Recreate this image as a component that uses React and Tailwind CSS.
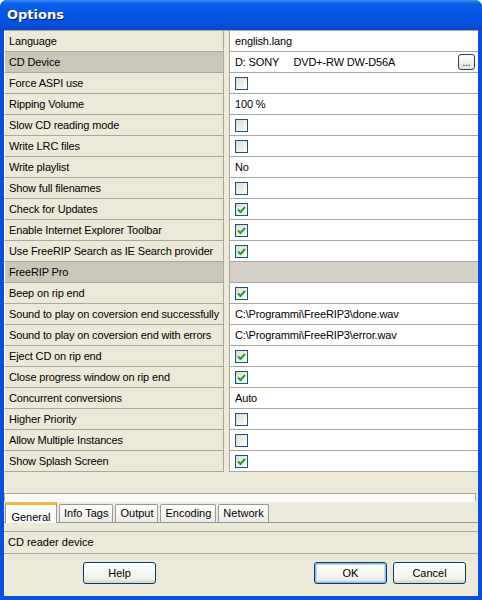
import React from "react";

const rows = [
  { label: "Language", value: "english.lang" },
  { label: "CD Device", value: "D: SONY     DVD+-RW DW-D56A", selected: true, browse: true },
  { label: "Force ASPI use", check: false },
  { label: "Ripping Volume", value: "100 %" },
  { label: "Slow CD reading mode", check: false },
  { label: "Write LRC files", check: false },
  { label: "Write playlist", value: "No" },
  { label: "Show full filenames", check: false },
  { label: "Check for Updates", check: true },
  { label: "Enable Internet Explorer Toolbar", check: true },
  { label: "Use FreeRIP Search as IE Search provider", check: true },
  { label: "FreeRIP Pro", category: true },
  { label: "Beep on rip end", check: true },
  { label: "Sound to play on coversion end successfully", value: "C:\\Programmi\\FreeRIP3\\done.wav" },
  { label: "Sound to play on coversion end with errors", value: "C:\\Programmi\\FreeRIP3\\error.wav" },
  { label: "Eject CD on rip end", check: true },
  { label: "Close progress window on rip end", check: true },
  { label: "Concurrent conversions", value: "Auto" },
  { label: "Higher Priority", check: false },
  { label: "Allow Multiple Instances", check: false },
  { label: "Show Splash Screen", check: true },
];

const tabs = ["General", "Info Tags", "Output", "Encoding", "Network"];

const CheckBox = ({ checked }) => (
  <div className="w-[13px] h-[13px] border border-[#1c5180] bg-[linear-gradient(135deg,#dcdad1,#ffffff)] flex items-center justify-center">
    {checked && (
      <svg width="9" height="9" viewBox="0 0 9 9">
        <path d="M1 4.5 L3.5 7 L8 2" stroke="#21a121" strokeWidth="2" fill="none" />
      </svg>
    )}
  </div>
);

const XpButton = ({ children, def }) => (
  <button
    className={`w-[73px] h-[22px] rounded-[3px] border border-[#003c74] bg-[linear-gradient(180deg,#ffffff,#f0f0ea_80%,#d6d0c5)] text-[11px] text-black ${
      def ? "shadow-[inset_0_0_0_1px_#97b8e6,inset_0_0_0_2px_#bcd4f6]" : ""
    }`}
  >
    {children}
  </button>
);

export default function App() {
  return (
    <div
      className="w-[482px] h-[600px] bg-[#0a4ee0] rounded-t-[7px] flex flex-col overflow-hidden"
      style={{ fontFamily: "Tahoma, 'Liberation Sans', Arial, sans-serif" }}
    >
      {/* title bar */}
      <div className="h-[30px] shrink-0 flex items-center px-[7px] bg-[linear-gradient(180deg,#3b8cf5_0%,#0a5fe8_12%,#0654e3_50%,#0552dd_80%,#0a46c8_100%)]">
        <span className="text-white font-bold text-[13px] [text-shadow:1px_1px_0_#0a1e6e]" style={{ fontFamily: "'DejaVu Sans', sans-serif" }}>
          Options
        </span>
      </div>

      <div className="flex-1 mx-[4px] mb-[4px] bg-[#ece9d8] flex flex-col text-[11px] text-black">
        {/* property grid */}
        <div className="flex flex-col border-t border-[#aca899] tracking-[-0.15px]">
          {rows.map((r, i) => (
            <div key={i} className="flex h-[21px]">
              <div
                className={`w-[219px] flex items-center pl-[4px] border-b border-[#aca899] border-l border-l-white overflow-hidden ${
                  r.selected || r.category ? "bg-[#cbc7b8]" : "bg-[#ece9d8]"
                }`}
              >
                <span className="whitespace-pre">{r.label}</span>
              </div>
              <div className="w-[7px] border-l border-[#aca899] border-r border-r-[#aca899] bg-[#ece9d8]" />
              <div
                className={`flex-1 flex items-center pl-[5px] border-b border-[#aca899] ${
                  r.category ? "bg-[#d4d0c8]" : "bg-white"
                }`}
              >
                {r.check !== undefined ? (
                  <CheckBox checked={r.check} />
                ) : (
                  <span className="whitespace-pre flex-1">{r.value}</span>
                )}
                {r.browse && (
                  <div className="w-[17px] h-[16px] mr-[3px] rounded-[3px] border border-[#1c3f74] bg-[linear-gradient(180deg,#ffffff,#e4e2d8)] flex items-end justify-center text-[10px] leading-[12px]">
                    ...
                  </div>
                )}
              </div>
            </div>
          ))}
        </div>

        {/* splitter */}
        <div className="mt-[21px] mr-[2px] h-[9px] border border-[#aca899] bg-[#fbfbf9] border-b-white" />

        {/* tabs */}
        <div className="flex items-end h-[21px] pl-[1px] border-b border-[#919b9c]">
          {tabs.map((t, i) =>
            i === 0 ? (
              <div
                key={t}
                className="h-[21px] w-[52px] pt-[4px] bg-[#fcfcfe] border-t-[3px] border-t-[#f7b545] border-x border-x-[#919b9c] -mb-px flex justify-center items-start"
              >
                {t}
              </div>
            ) : (
              <div
                key={t}
                className="h-[18px] ml-[2px] px-[4px] rounded-t-[2px] border-t border-x border-[#919b9c] bg-[linear-gradient(180deg,#ffffff,#ecebe5)] flex items-center"
              >
                {t}
              </div>
            )
          )}
        </div>

        {/* description */}
        <div className="mt-[8px] h-[23px] flex items-center pl-[4px] border-t border-[#aca899] border-b">
          CD reader device
        </div>

        {/* buttons */}
        <div className="flex items-center mt-[8px] h-[22px]">
          <div className="ml-[79px]">
            <XpButton>Help</XpButton>
          </div>
          <div className="ml-auto mr-[12px] flex gap-[6px]">
            <XpButton def>OK</XpButton>
            <XpButton>Cancel</XpButton>
          </div>
        </div>
      </div>
    </div>
  );
}
